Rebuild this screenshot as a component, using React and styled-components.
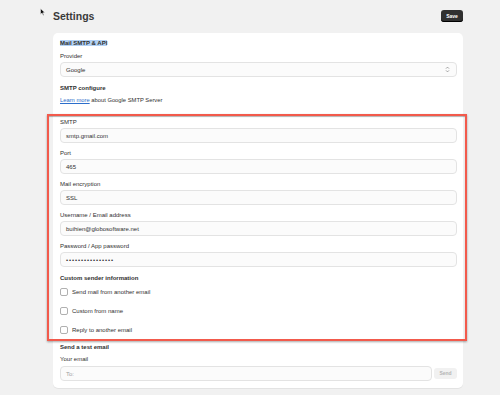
import React from 'react'
import styled, { createGlobalStyle } from 'styled-components'

const GlobalStyle = createGlobalStyle`
  body {
    margin: 0;
    background: #f1f1f1;
    font-family: "Liberation Sans", Arial, sans-serif;
    color: #303030;
  }
`

const Page = styled.div`
  position: relative;
  width: 500px;
  height: 395px;
  overflow: hidden;
  padding: 9px 37px 0 53px;
  box-sizing: border-box;
`

const Cursor = styled.svg`
  position: absolute;
  left: 40px;
  top: 8px;
`

const Header = styled.div`
  display: flex;
  align-items: center;
  justify-content: space-between;
  height: 14px;
  margin-bottom: 10px;
`

const PageTitle = styled.h1`
  margin: 0;
  font-size: 10.5px;
  font-weight: 700;
  color: #3a3a3a;
`

const DarkButton = styled.button`
  width: 22px;
  height: 12px;
  padding: 0;
  border: none;
  border-radius: 3px;
  background: #303030;
  color: #fff;
  font-family: inherit;
  font-size: 5px;
  font-weight: 700;
  box-shadow: inset 0 -1px 0 #000;
`

const Card = styled.section`
  position: relative;
  background: #fff;
  border-radius: 5px;
  padding: 5px 6px 7px 7px;
  box-shadow: 0 1px 0 #e3e3e3;
`

const SectionTitle = styled.h2`
  margin: ${({ $top }) => $top || 0}px 0 0;
  font-size: 6px;
  font-weight: 700;
  line-height: 10px;
  color: #303030;
`

const Highlight = styled.span`
  background: #b3d2f5;
`

const Label = styled.div`
  margin-top: ${({ $top }) => $top ?? 5}px;
  font-size: 6px;
  line-height: 10px;
  color: #303030;
`

const Field = styled.div`
  display: flex;
  align-items: center;
  justify-content: space-between;
  height: 15px;
  margin-top: 1px;
  padding: 0 6px 0 5px;
  box-sizing: border-box;
  border: 1px solid #e3e3e3;
  border-radius: 4px;
  background: #fbfbfb;
  font-size: 6px;
  letter-spacing: ${({ $secret }) => ($secret ? '0.9px' : 'normal')};
  color: ${({ $placeholder }) => ($placeholder ? '#a0a0a0' : '#303030')};
  flex: 1;
`

const Text = styled.div`
  margin-top: 2px;
  font-size: 5.8px;
  line-height: 10px;
  color: #303030;

  a {
    color: #2c6ecb;
    text-decoration: underline;
  }
`

const CheckRow = styled.label`
  display: flex;
  align-items: center;
  gap: 4px;
  height: 10px;
  margin-top: ${({ $top }) => $top}px;
  font-size: 6px;
  color: #303030;
`

const Box = styled.span`
  width: 6px;
  height: 6px;
  border: 1px solid #b0b0b0;
  border-radius: 2px;
  background: #fff;
`

const InputRow = styled.div`
  display: flex;
  align-items: center;
  gap: 2px;
  margin-top: 1px;
`

const GhostButton = styled.button`
  width: 23px;
  height: 11px;
  padding: 0;
  border: none;
  border-radius: 3px;
  background: #f1f1f1;
  color: #b5b5b5;
  font-family: inherit;
  font-size: 5px;
  font-weight: 700;
`

const Annotation = styled.div`
  position: absolute;
  left: -6px;
  top: 81px;
  width: 420px;
  height: 227px;
  box-sizing: border-box;
  border: 2.5px solid #f25a4c;
  box-shadow: 0 1px 2px rgba(0, 0, 0, 0.35), inset 0 1px 1px rgba(0, 0, 0, 0.3);
  pointer-events: none;
`

const NextCard = styled.div`
  margin-top: 8px;
  height: 20px;
  background: #fff;
  border-radius: 5px;
`

const Chevrons = () => (
  <svg width="5" height="7" viewBox="0 0 5 7">
    <path d="M1 2.6 L2.5 1.1 L4 2.6 M1 4.4 L2.5 5.9 L4 4.4" fill="none" stroke="#8a8a8a" strokeWidth="0.8" />
  </svg>
)

const fields = [
  { label: 'SMTP', value: 'smtp.gmail.com', top: 12 },
  { label: 'Port', value: '465' },
  { label: 'Mail encryption', value: 'SSL' },
  { label: 'Username / Email address', value: 'buihien@globosoftware.net' },
  { label: 'Password / App password', value: '••••••••••••••••', secret: true },
]

const checks = ['Send mail from another email', 'Custom from name', 'Reply to another email']

const App = () => (
  <>
    <GlobalStyle />
    <Page>
      <Cursor width="6" height="8" viewBox="0 0 6 8">
        <path d="M0.5 0.5 L0.5 6.5 L2 5 L3.2 7.4 L4 7 L2.9 4.7 L5 4.7 Z" fill="#111" stroke="#fff" strokeWidth="0.5" />
      </Cursor>
      <Header>
        <PageTitle>Settings</PageTitle>
        <DarkButton>Save</DarkButton>
      </Header>
      <Card>
        <SectionTitle>
          <Highlight>Mail SMTP &amp; API</Highlight>
        </SectionTitle>
        <Label $top={3}>Provider</Label>
        <Field>
          <span>Google</span>
          <Chevrons />
        </Field>
        <SectionTitle $top={6}>SMTP configure</SectionTitle>
        <Text>
          <a href="#">Learn more</a> about Google SMTP Server
        </Text>
        {fields.map((field) => (
          <React.Fragment key={field.label}>
            <Label $top={field.top}>{field.label}</Label>
            <Field $secret={field.secret}>{field.value}</Field>
          </React.Fragment>
        ))}
        <SectionTitle $top={6}>Custom sender information</SectionTitle>
        {checks.map((check, i) => (
          <CheckRow key={check} $top={i === 0 ? 4 : 9}>
            <Box />
            {check}
          </CheckRow>
        ))}
        <SectionTitle $top={7}>Send a test email</SectionTitle>
        <Label $top={2}>Your email</Label>
        <InputRow>
          <Field $placeholder>To:</Field>
          <GhostButton>Send</GhostButton>
        </InputRow>
        <Annotation />
      </Card>
      <NextCard />
    </Page>
  </>
)

export default App
